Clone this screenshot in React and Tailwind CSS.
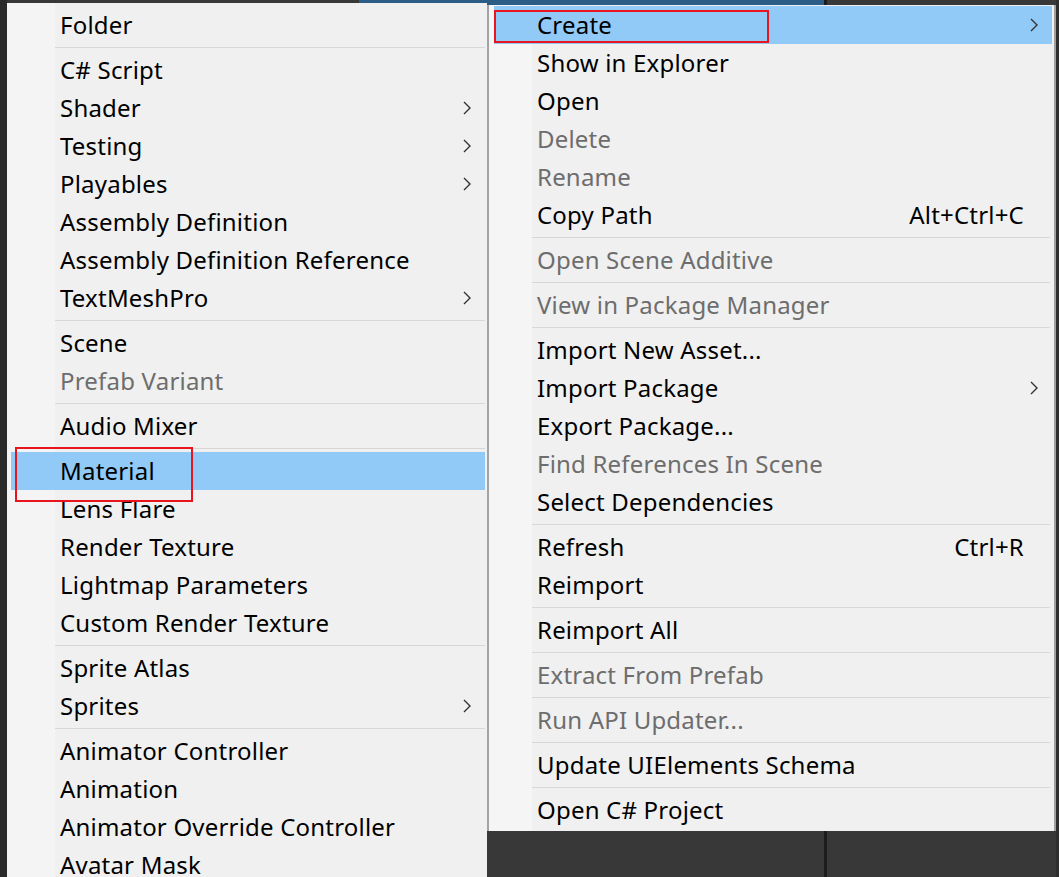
import React from "react";

const FONT = "font-['Noto_Sans','Liberation_Sans',sans-serif]";

function Arrow() {
  return (
    <svg width="8" height="14" viewBox="0 0 8 14" className="shrink-0">
      <polyline points="1,1 7,7 1,13" fill="none" stroke="#333" strokeWidth="1.4" />
    </svg>
  );
}

function Item({ label, disabled, arrow, shortcut, active, pad }) {
  return (
    <div
      className={`flex items-center h-[38px] ${pad} pr-[14px] ${
        active ? "bg-[#91c9f7]" : ""
      }`}
    >
      <span
        className={`flex-1 whitespace-nowrap text-[24px] tracking-[0.2px] leading-none ${
          disabled ? "text-[#6d6d6d]" : "text-black"
        }`}
      >
        {label}
      </span>
      {shortcut && (
        <span className="whitespace-nowrap text-[24px] tracking-[0.2px] leading-none text-black mr-[6px]">
          {shortcut}
        </span>
      )}
      {arrow ? <Arrow /> : <span className="w-[8px]" />}
    </div>
  );
}

function Sep({ ml }) {
  return (
    <div className="h-[7px] flex items-center">
      <div className={`h-px flex-1 bg-[#d7d7d7] ${ml}`} />
    </div>
  );
}

const leftItems = [
  { label: "Folder" },
  "sep",
  { label: "C# Script" },
  { label: "Shader", arrow: true },
  { label: "Testing", arrow: true },
  { label: "Playables", arrow: true },
  { label: "Assembly Definition" },
  { label: "Assembly Definition Reference" },
  { label: "TextMeshPro", arrow: true },
  "sep",
  { label: "Scene" },
  { label: "Prefab Variant", disabled: true },
  "sep",
  { label: "Audio Mixer" },
  "sep",
  { label: "Material", active: true },
  { label: "Lens Flare" },
  { label: "Render Texture" },
  { label: "Lightmap Parameters" },
  { label: "Custom Render Texture" },
  "sep",
  { label: "Sprite Atlas" },
  { label: "Sprites", arrow: true },
  "sep",
  { label: "Animator Controller" },
  { label: "Animation" },
  { label: "Animator Override Controller" },
  { label: "Avatar Mask" },
];

const rightItems = [
  { label: "Create", arrow: true, active: true },
  { label: "Show in Explorer" },
  { label: "Open" },
  { label: "Delete", disabled: true },
  { label: "Rename", disabled: true },
  { label: "Copy Path", shortcut: "Alt+Ctrl+C" },
  "sep",
  { label: "Open Scene Additive", disabled: true },
  "sep",
  { label: "View in Package Manager", disabled: true },
  "sep",
  { label: "Import New Asset..." },
  { label: "Import Package", arrow: true },
  { label: "Export Package..." },
  { label: "Find References In Scene", disabled: true },
  { label: "Select Dependencies" },
  "sep",
  { label: "Refresh", shortcut: "Ctrl+R" },
  { label: "Reimport" },
  "sep",
  { label: "Reimport All" },
  "sep",
  { label: "Extract From Prefab", disabled: true },
  "sep",
  { label: "Run API Updater...", disabled: true },
  "sep",
  { label: "Update UIElements Schema" },
  "sep",
  { label: "Open C# Project" },
];

export default function App() {
  return (
    <div className={`relative w-[1059px] h-[877px] overflow-hidden bg-[#383838] ${FONT}`}>
      {/* editor background, laid out by flow */}
      <div className="flex h-full">
        <div className="w-[7px] bg-[#2a2a2a]" />
        <div className="w-[817px] flex flex-col">
          <div className="flex h-[5px]">
            <div className="w-[352px]" />
            <div className="flex-1 bg-[#2c5d87]" />
          </div>
        </div>
        <div className="w-[3px] bg-[#1c1c1c]" />
        <div className="flex-1" />
        <div className="w-[3px] bg-[#2e2e2e]" />
      </div>

      {/* left popup menu */}
      <div className="absolute left-[7px] top-[3px] w-[480px] h-[900px] pt-[3px] pl-[4px] pr-[2px] bg-[linear-gradient(to_right,#f4f4f4_48px,#f0f0f0_48px)]">
        {leftItems.map((it, i) =>
          it === "sep" ? (
            <Sep key={i} ml="ml-[44px]" />
          ) : (
            <Item key={i} {...it} pad="pl-[49px]" />
          )
        )}
      </div>

      {/* right popup submenu */}
      <div className="absolute left-[487px] top-[5px] w-[569px] h-[826px] border-l-2 border-l-[#a3a3a3] border-r-2 border-r-[#a0a0a0] pt-[1px] pl-[5px] pr-[2px] bg-[linear-gradient(to_right,#f5f5f5_43px,#f0f0f0_43px)]">
        {rightItems.map((it, i) =>
          it === "sep" ? (
            <Sep key={i} ml="ml-[38px] mr-[2px]" />
          ) : (
            <Item key={i} {...it} pad="pl-[43px]" />
          )
        )}
      </div>

      {/* annotation boxes */}
      <div className="absolute left-[494px] top-[10px] w-[275px] h-[33px] border-2 border-[#e8141e]" />
      <div className="absolute left-[15px] top-[447px] w-[178px] h-[55px] border-2 border-[#e8141e]" />
    </div>
  );
}
